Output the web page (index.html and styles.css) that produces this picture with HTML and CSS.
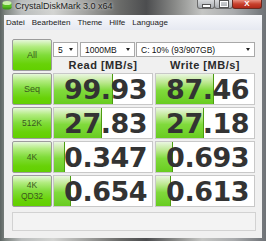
FILE: index.html
```html
<!DOCTYPE html>
<html lang="de">
<head>
    <meta charset="UTF-8">
    <link rel="stylesheet" href="styles.css">
    <title>CrystalDiskMark 3.0 x64</title>
</head>
<body>
<div class="win">
    <div class="titlebar">
        <svg class="appicon" width="10" height="10" viewBox="0 0 10 10">
            <ellipse cx="5" cy="7.5" rx="4.5" ry="2" fill="#3f9a18"/>
            <rect x="0.5" y="3" width="9" height="4.5" fill="#58c020"/>
            <ellipse cx="5" cy="3" rx="4.5" ry="2" fill="#c8f0a8"/>
        </svg>
        <span class="title">CrystalDiskMark 3.0 x64</span>
        <div class="caps">
            <div class="cap"><span class="minbar"></span></div>
            <div class="cap"><span class="maxbox"></span></div>
            <div class="cap close">X</div>
        </div>
    </div>
    <div class="menu">
        <span>Datei</span>
        <span>Bearbeiten</span>
        <span>Theme</span>
        <span>Hilfe</span>
        <span>Language</span>
    </div>
    <div class="main">
        <div class="bench">
            <div class="btn all">All</div>
            <div class="top">
                <div class="selects">
                    <div class="sel s1">5<i class="arr"></i></div>
                    <div class="sel s2">1000MB<i class="arr"></i></div>
                    <div class="sel s3">C: 10% (93/907GB)<i class="arr"></i></div>
                </div>
                <div class="heads">
                    <span>Read [MB/s]</span>
                    <span>Write [MB/s]</span>
                </div>
            </div>

            <div class="btn seq">Seq</div>
            <div class="box" style="--w:59px">99.93</div>
            <div class="box" style="--w:58px">87.46</div>

            <div class="btn">512K</div>
            <div class="box" style="--w:48px">27.83</div>
            <div class="box" style="--w:48px">27.18</div>

            <div class="btn">4K</div>
            <div class="box" style="--w:11px">0.347</div>
            <div class="box" style="--w:17px">0.693</div>

            <div class="btn two">4K<br>QD32</div>
            <div class="box" style="--w:17px">0.654</div>
            <div class="box" style="--w:15px">0.613</div>
        </div>
        <div class="status"></div>
    </div>
</div>
</body>
</html>
```

FILE: styles.css
```css
body{
    margin: 0;
    width: 266px;
    height: 241px;
    overflow: hidden;
    font-family: "Liberation Sans", Arial, sans-serif;
    background: #4f555b;
}
.win{
    height: 241px;
    box-sizing: border-box;
    display: flex;
    flex-direction: column;
    padding: 0 4px 3px 4px;
    background: linear-gradient(90deg, #5c6462 0%, #7d8480 2%, #b9bcbc 8%, #d3d4d2 20%, #a3a4a2 32%, #6a6b69 45%, #4c4d4f 55%, #8a8b89 66%, #c5c6c4 76%, #a9abad 88%, #6e7276 100%);
}
.titlebar{
    height: 15px;
    display: flex;
    align-items: flex-start;
}
.appicon{
    margin: 0 3px 0 -2px;
}
.title{
    font-size: 9px;
    line-height: 12px;
    color: #1e1e1e;
    text-shadow: 0 0 3px #e8e8e8;
}
.caps{
    margin-left: auto;
    display: flex;
}
.cap{
    width: 16px;
    height: 8px;
    border: 1px solid #6a6a6a;
    border-top: none;
    border-radius: 0 0 3px 3px;
    background: linear-gradient(#d8dadc, #a8acb0);
    display: flex;
    align-items: center;
    justify-content: center;
}
.cap + .cap{
    margin-left: -1px;
    width: 17px;
}
.minbar{
    width: 7px;
    height: 2px;
    margin-top: 3px;
    background: #fff;
    border: 1px solid #555;
}
.maxbox{
    width: 6px;
    height: 4px;
    border: 1px solid #fff;
    outline: 1px solid #555;
}
.cap.close{
    width: 28px;
    background: linear-gradient(#e89080, #c8402c 50%, #b02818);
    border-color: #6a2a20;
    color: #fff;
    font: bold 8px "Liberation Sans", Arial, sans-serif;
    line-height: 8px;
}
.menu{
    height: 15px;
    background: linear-gradient(#f7f8fb, #e6e9f1);
    display: flex;
    align-items: center;
    gap: 7px;
    padding-left: 2px;
    font-size: 8px;
    color: #1a1a1a;
}
.main{
    flex: 1;
    background: #f0f0f0;
    padding: 9px 0 0 8px;
}
.bench{
    display: grid;
    grid-template-columns: 40px 101px 102px;
    grid-auto-rows: 32px;
    row-gap: 2px;
}
.btn{
    box-sizing: border-box;
    height: 32px;
    border: 1px solid #9c9c9c;
    border-radius: 2px;
    background: linear-gradient(#e6f7da 0%, #b2ec80 22%, #80dc3a 50%, #68d208 80%, #62d000 100%);
    color: #3b5a1e;
    font-size: 8.5px;
    display: flex;
    align-items: center;
    justify-content: center;
    text-align: center;
}
.btn.all{
    font-size: 9px;
}
.btn.seq{
    font-size: 9px;
}
.btn.two{
    line-height: 11px;
}
.top{
    grid-column: 2 / 4;
    padding-left: 1px;
}
.selects{
    display: flex;
    margin-top: 3px;
}
.sel{
    height: 15px;
    box-sizing: border-box;
    border: 1px solid #a9a9a9;
    background: #fff;
    font-size: 8.5px;
    color: #111;
    display: flex;
    align-items: center;
    justify-content: space-between;
    padding: 0 4px 0 4px;
}
.s1{ width: 25px; margin-right: 2px; }
.s2{ width: 55px; margin-right: 1px; }
.s3{ width: 119px; }
.arr{
    width: 0;
    height: 0;
    border-left: 2.5px solid transparent;
    border-right: 2.5px solid transparent;
    border-top: 3px solid #222;
}
.heads{
    display: flex;
    gap: 2px;
    margin-top: 1px;
    height: 14px;
    line-height: 14px;
}
.heads span{
    width: 100px;
    text-align: center;
    font-size: 11px;
    font-weight: bold;
    letter-spacing: 0.5px;
    color: #2a2a2a;
}
.box{
    justify-self: end;
    width: 100px;
    height: 32px;
    box-sizing: border-box;
    border: 1px solid #c8c8c8;
    background-color: #fff;
    background-image: linear-gradient(90deg, transparent calc(100% - 1px), #4c9c10 0), linear-gradient(#eaf6e0 0%, #bce890 28%, #80da3c 55%, #68cc20 100%);
    background-size: var(--w) 100%;
    background-repeat: no-repeat;
    font: bold 27px "DejaVu Sans", Verdana, sans-serif;
    letter-spacing: -0.5px;
    color: #333;
    display: flex;
    align-items: center;
    justify-content: flex-end;
    padding-right: 5px;
}
.status{
    margin-top: 5px;
    width: 244px;
    height: 19px;
    box-sizing: border-box;
    border: 1px solid #d2d2d2;
    background: #f3f3f3;
}
```
